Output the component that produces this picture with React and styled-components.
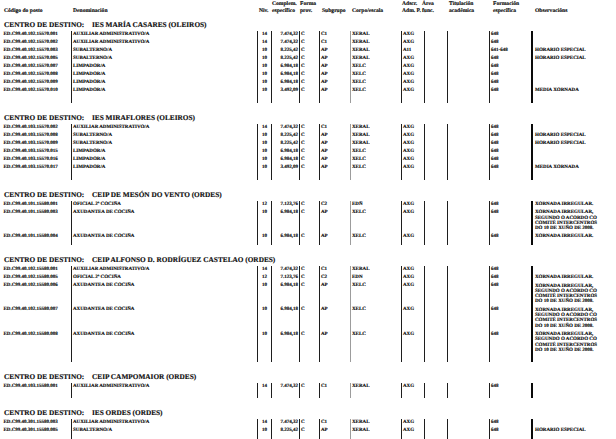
import React from 'react';
import styled, { createGlobalStyle } from 'styled-components';

const Global = createGlobalStyle`
  html, body { margin: 0; padding: 0; background: #ffffff; }
  body {
    font-family: "Liberation Serif", "Times New Roman", serif;
    color: #0c0c0c;
    text-rendering: geometricPrecision;
    -webkit-text-stroke: 0.15px #0c0c0c;
  }
`;

const COLS = '71px 186px 14px 28px 20px 31px 51px 23px 23px 42px 42px 85px';

const LINES = {
  none: 'none',
  dark: '1px solid #1e1e1e',
  grey: '1px solid #9c9c9c',
  heavy: '2px solid #0a0a0a',
};

const Page = styled.div`
  width: 616px;
  height: 439px;
  overflow: hidden;
  box-sizing: border-box;
  padding-top: 1px;
  display: flex;
  flex-direction: column;
`;

const HeaderRow = styled.header`
  display: grid;
  grid-template-columns: ${COLS};
  font-size: 5.6px;
  line-height: 7px;
  font-weight: bold;
  height: 14px;
`;

const HeadCell = styled.div`
  align-self: end;
  white-space: nowrap;
  padding-left: ${(p) => p.$pl ?? 0}px;
  margin-left: ${(p) => p.$shift ?? 0}px;
  text-align: ${(p) => p.$align || 'left'};
`;

const Section = styled.section`
  display: flex;
  flex-direction: column;
  margin-top: 10px;
  &:first-of-type {
    margin-top: 5px;
  }
`;

const Title = styled.h2`
  margin: 0;
  display: flex;
  padding-left: 4px;
  font-size: 7.3px;
  line-height: 10px;
  font-weight: bold;
  white-space: nowrap;
`;

const TitleLabel = styled.span`
  flex: none;
  width: 88px;
`;

const Body = styled.div`
  margin-top: 1px;
  display: flex;
  flex-direction: column;
  font-size: 5px;
  font-weight: bold;
`;

const Row = styled.div`
  display: grid;
  grid-template-columns: ${COLS};
  min-height: ${(p) => p.$h ?? 8}px;
  line-height: 8px;
`;

const Cell = styled.div`
  box-sizing: border-box;
  white-space: nowrap;
  overflow: hidden;
  border-left: ${(p) => LINES[p.$line || 'none']};
  padding-left: ${(p) => p.$pl ?? 0}px;
  padding-right: ${(p) => p.$pr ?? 0}px;
  text-align: ${(p) => p.$align || 'left'};
`;

const ObsText = styled.div`
  line-height: ${(p) => (p.$multi ? '5.3px' : '8px')};
  padding: ${(p) => (p.$multi ? '1.4px 0 1.6px' : '0')};
`;

const COLUMNS = [
  { line: 'none', pl: 3.5 },
  { line: 'dark', pl: 1 },
  { line: 'dark', align: 'center' },
  { line: 'dark', align: 'right', pr: 1 },
  { line: 'dark', pl: 1 },
  { line: 'dark', pl: 1 },
  { line: 'grey', pl: 1 },
  { line: 'dark', pl: 1 },
  { line: 'dark' },
  { line: 'dark' },
  { line: 'dark', pl: 1 },
  { line: 'heavy', pl: 2 },
];

const AUX = ['AUXILIAR ADMINISTRATIVO/A', '14', '7.474,32', 'C', 'C1', 'XERAL', 'AXG', '', '', '648'];
const SUB = ['SUBALTERNO/A', '10', '8.225,42', 'C', 'AP', 'XERAL', 'AXG', '', '', '648'];
const LIM = ['LIMPADOR/A', '10', '6.984,18', 'C', 'AP', 'XELC', 'AXG', '', '', '648'];
const LIMH = ['LIMPADOR/A', '10', '3.492,09', 'C', 'AP', 'XELC', 'AXG', '', '', '648'];
const OFI = (corpo) => ['OFICIAL 2ª COCIÑA', '12', '7.123,76', 'C', 'C2', corpo, 'AXG', '', '', '648'];
const AXU = ['AXUDANTEA DE COCIÑA', '10', '6.984,18', 'C', 'AP', 'XELC', 'AXG', '', '', '648'];

const HE = ['HORARIO ESPECIAL'];
const MX = ['MEDIA XORNADA'];
const XI = ['XORNADA IRREGULAR.'];
const XL = ['XORNADA IRREGULAR,', 'SEGUNDO O ACORDO CO', 'COMITÉ INTERCENTROS', 'DO 10 DE XUÑO DE 2008.'];

const SECTIONS = [
  {
    name: 'IES MARÍA CASARES (OLEIROS)',
    tail: 8,
    rows: [
      ['ED.C99.40.102.15570.001', AUX, []],
      ['ED.C99.40.102.15570.002', AUX, []],
      ['ED.C99.40.102.15570.003', ['SUBALTERNO/A', '10', '8.225,42', 'C', 'AP', 'XERAL', 'A11', '', '', '641-648'], HE],
      ['ED.C99.40.102.15570.005', SUB, HE],
      ['ED.C99.40.102.15570.007', LIM, []],
      ['ED.C99.40.102.15570.008', LIM, []],
      ['ED.C99.40.102.15570.009', LIM, []],
      ['ED.C99.40.102.15570.010', LIMH, MX],
    ],
  },
  {
    name: 'IES MIRAFLORES (OLEIROS)',
    tail: 8,
    rows: [
      ['ED.C99.40.103.15570.002', AUX, []],
      ['ED.C99.40.103.15570.008', SUB, HE],
      ['ED.C99.40.103.15570.009', SUB, HE],
      ['ED.C99.40.103.15570.015', LIM, []],
      ['ED.C99.40.103.15570.016', LIM, []],
      ['ED.C99.40.103.15570.017', LIMH, MX],
    ],
  },
  {
    name: 'CEIP DE MESÓN DO VENTO (ORDES)',
    tail: 4,
    rows: [
      ['ED.C99.40.101.15580.001', OFI('EDÑ'), XI],
      ['ED.C99.40.101.15580.003', AXU, XL],
      ['ED.C99.40.101.15580.004', AXU, XI],
    ],
  },
  {
    name: 'CEIP ALFONSO D. RODRÍGUEZ CASTELAO (ORDES)',
    tail: 7,
    rows: [
      ['ED.C99.40.102.15580.001', AUX, []],
      ['ED.C99.40.102.15580.005', OFI('EDN'), XI],
      ['ED.C99.40.102.15580.006', AXU, XL],
      ['ED.C99.40.102.15580.007', AXU, XL],
      ['ED.C99.40.102.15580.008', AXU, XL],
    ],
  },
  {
    name: 'CEIP CAMPOMAIOR (ORDES)',
    tail: 7,
    rows: [['ED.C99.40.103.15580.001', AUX, []]],
  },
  {
    name: 'IES ORDES (ORDES)',
    tail: 8,
    rows: [
      ['ED.C99.40.301.15580.003', AUX, []],
      ['ED.C99.40.301.15580.005', SUB, HE],
    ],
  },
];

function DataRow({ code, values, obs }) {
  const cells = [code, ...values];
  return (
    <Row>
      {cells.map((v, i) => {
        const c = COLUMNS[i];
        return (
          <Cell key={i} $line={c.line} $pl={c.pl} $pr={c.pr} $align={c.align}>
            {v}
          </Cell>
        );
      })}
      <Cell $line="heavy" $pl={2}>
        <ObsText $multi={obs.length > 1}>
          {obs.map((l, i) => (
            <div key={i}>{l}</div>
          ))}
        </ObsText>
      </Cell>
    </Row>
  );
}

function TailRow({ h }) {
  return (
    <Row $h={h}>
      {COLUMNS.map((c, i) => (
        <Cell key={i} $line={c.line} />
      ))}
    </Row>
  );
}

export default function App() {
  return (
    <>
      <Global />
      <Page>
        <HeaderRow>
          <HeadCell $pl={4}>Código do posto</HeadCell>
          <HeadCell $pl={2}>Denominación</HeadCell>
          <HeadCell $pl={2}>Niv.</HeadCell>
          <HeadCell $pl={1}>
            Complem.
            <br />
            específico
          </HeadCell>
          <HeadCell $pl={1}>
            Forma
            <br />
            prov.
          </HeadCell>
          <HeadCell $pl={3}>Subgrupo</HeadCell>
          <HeadCell $pl={2}>Corpo/escala</HeadCell>
          <HeadCell $pl={1}>
            Adscr.
            <br />
            Adm. P.
          </HeadCell>
          <HeadCell $shift={-2}>
            Área
            <br />
            func.
          </HeadCell>
          <HeadCell $pl={2}>
            Titulación
            <br />
            académica
          </HeadCell>
          <HeadCell $pl={4}>
            Formación
            <br />
            específica
          </HeadCell>
          <HeadCell $pl={4}>Observacións</HeadCell>
        </HeaderRow>
        {SECTIONS.map((s) => (
          <Section key={s.name}>
            <Title>
              <TitleLabel>CENTRO DE DESTINO:</TitleLabel>
              <span>{s.name}</span>
            </Title>
            <Body>
              {s.rows.map(([code, values, obs]) => (
                <DataRow key={code} code={code} values={values} obs={obs} />
              ))}
              <TailRow h={s.tail} />
            </Body>
          </Section>
        ))}
      </Page>
    </>
  );
}
